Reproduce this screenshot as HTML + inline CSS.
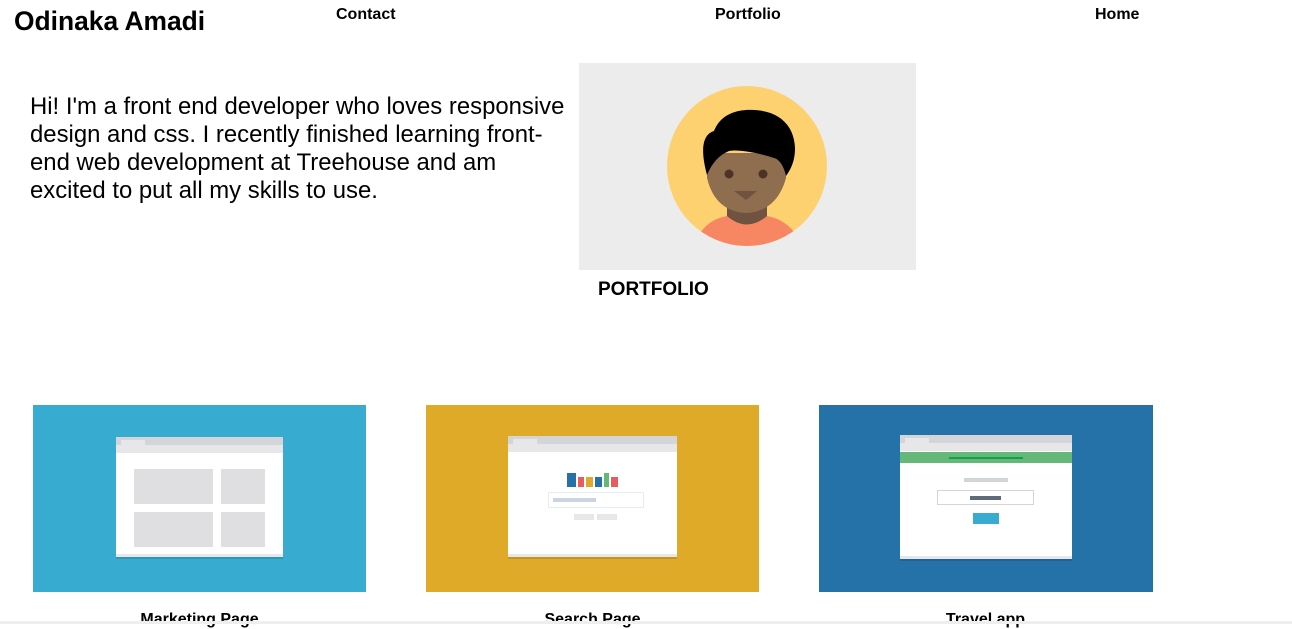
<!DOCTYPE html>
<html><head><meta charset="utf-8"><style>
*{margin:0;padding:0;box-sizing:border-box}
body{width:1292px;height:624px;overflow:hidden;background:#fff;font-family:"Liberation Sans",Arial,sans-serif;color:#000;position:relative}
.a{position:absolute}
.nav{font-weight:bold;font-size:16px;top:6px}
.card{position:absolute;top:405px;height:187px}
.br{position:absolute;background:#fff;box-shadow:0 2px 0 rgba(0,0,0,.12)}
.br .top{position:absolute;left:0;right:0;top:0;height:8px;background:#d4d5d8}
.br .tab{position:absolute;left:5px;top:3px;width:24px;height:5px;background:#e7e7ea}
.br .bar{position:absolute;left:0;right:0;top:8px;height:8px;background:#e7e7ea}
.br .bot{position:absolute;left:0;right:0;bottom:0;height:3px;background:#e7e7ea}
.lbl{position:absolute;top:611px;font-weight:bold;font-size:16px;text-align:center;width:333px}
</style></head><body>
<div class="a" style="left:14px;top:6px;font-size:26.4px;font-weight:bold">Odinaka Amadi</div>
<div class="a nav" style="left:336px">Contact</div>
<div class="a nav" style="left:715px">Portfolio</div>
<div class="a nav" style="left:1095px">Home</div>
<div class="a" style="left:30px;top:93px;width:545px;font-size:23.9px;line-height:28px">Hi! I'm a front end developer who loves responsive design and css. I recently finished learning front-end web development at Treehouse and am excited to put all my skills to use.</div>
<div class="a" style="left:579px;top:63px;width:337px;height:207px;background:#ececec">
<svg width="337" height="207" viewBox="0 0 337 207">
<defs><clipPath id="c"><circle cx="168" cy="103" r="80"/></clipPath></defs>
<circle cx="168" cy="103" r="80" fill="#fdd170"/>
<g clip-path="url(#c)">
<path d="M148 125 L188 125 L188 160 Q168 172 148 160 Z" fill="#6f5240"/>
<path d="M113 190 Q120 158 148 153 Q168 170 188 153 Q216 158 225 190 L225 210 L113 210 Z" fill="#f78662"/>
</g>
<path d="M128 90 L207 90 L207 115 C200 140 185 149 167 150 C149 149 134 140 128 115 Z" fill="#8f6e50"/>
<path d="M128 112 C122 90 122 72 135 68 C142 50 160 46 175 47 C200 48 215 62 216 85 C216 98 212 106 207 113 C205 103 200 96 195 95 C180 90 160 86 150 88 C140 92 133 100 128 112 Z" fill="#000"/>
<circle cx="150" cy="111" r="4.5" fill="#4d3323"/>
<circle cx="184" cy="111" r="4.5" fill="#4d3323"/>
<path d="M155 128 L178 128 L167 137 Z" fill="#6f5240"/>
</svg></div>
<div class="a" style="left:598px;top:279px;font-size:19px;font-weight:bold">PORTFOLIO</div>

<div class="card" style="left:33px;width:333px;background:#37abd0">
 <div class="br" style="left:83px;top:32px;width:167px;height:120px">
  <div class="top"></div><div class="tab"></div><div class="bar"></div><div class="bot"></div>
  <div class="a" style="left:18px;top:32px;width:79px;height:35px;background:#dfdfe1"></div>
  <div class="a" style="left:105px;top:32px;width:44px;height:35px;background:#dfdfe1"></div>
  <div class="a" style="left:18px;top:75px;width:79px;height:35px;background:#dfdfe1"></div>
  <div class="a" style="left:105px;top:75px;width:44px;height:35px;background:#dfdfe1"></div>
 </div>
</div>
<div class="card" style="left:426px;width:333px;background:#dfaa27">
 <div class="br" style="left:82px;top:31px;width:169px;height:121px">
  <div class="top"></div><div class="tab"></div><div class="bar"></div><div class="bot"></div>
  <div class="a" style="left:59px;top:37px;width:9px;height:14px;background:#2572a9"></div>
  <div class="a" style="left:70px;top:41px;width:6px;height:10px;background:#e85b5e"></div>
  <div class="a" style="left:78px;top:41px;width:7px;height:10px;background:#dfaa27"></div>
  <div class="a" style="left:87px;top:41px;width:7px;height:10px;background:#2572a9"></div>
  <div class="a" style="left:96px;top:37px;width:5px;height:14px;background:#66b87a"></div>
  <div class="a" style="left:103px;top:41px;width:7px;height:10px;background:#e85b5e"></div>
  <div class="a" style="left:40px;top:56px;width:96px;height:16px;border:1px solid #e6ecf2"></div>
  <div class="a" style="left:45px;top:62px;width:43px;height:4px;background:#ccd4e2"></div>
  <div class="a" style="left:66px;top:78px;width:20px;height:6px;background:#e7e7ea"></div>
  <div class="a" style="left:89px;top:78px;width:20px;height:6px;background:#e7e7ea"></div>
 </div>
</div>
<div class="card" style="left:819px;width:334px;background:#2572a9">
 <div class="br" style="left:81px;top:30px;width:172px;height:124px">
  <div class="top"></div><div class="tab"></div><div class="bar"></div><div class="bot"></div>
  <div class="a" style="left:0;right:0;top:17px;height:11px;background:#66b87a"></div>
  <div class="a" style="left:49px;top:22px;width:74px;height:2px;background:#0ea24f"></div>
  <div class="a" style="left:64px;top:43px;width:44px;height:4px;background:#d4d5d8"></div>
  <div class="a" style="left:37px;top:55px;width:97px;height:15px;border:1px solid #d4d5d8"></div>
  <div class="a" style="left:70px;top:61px;width:31px;height:4px;background:#5f6b78"></div>
  <div class="a" style="left:73px;top:78px;width:26px;height:11px;background:#37abd0"></div>
 </div>
</div>
<div class="lbl" style="left:33px">Marketing Page</div>
<div class="lbl" style="left:426px">Search Page</div>
<div class="lbl" style="left:819px">Travel app</div>
<div class="a" style="left:0;top:621px;width:1292px;height:3px;background:#eee"></div>
</body></html>
